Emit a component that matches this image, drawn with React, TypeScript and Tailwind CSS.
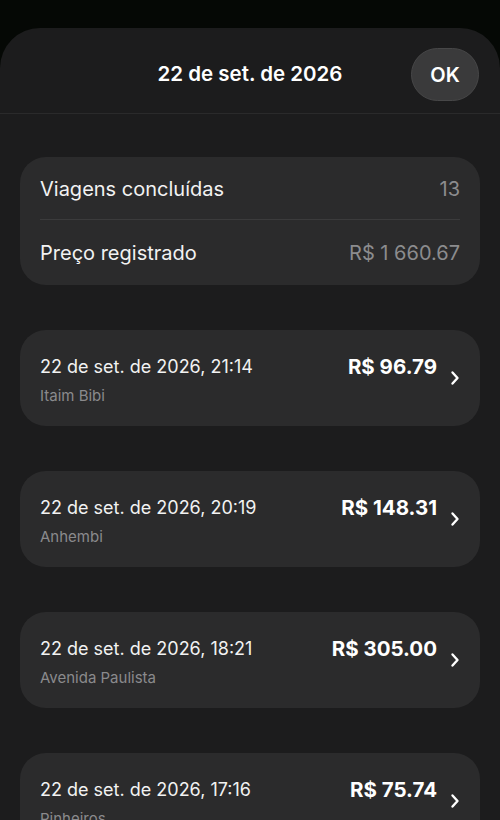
import React from "react";

const trips = [
  { date: "22 de set. de 2026, 21:14", place: "Itaim Bibi", price: "R$ 96.79" },
  { date: "22 de set. de 2026, 20:19", place: "Anhembi", price: "R$ 148.31" },
  { date: "22 de set. de 2026, 18:21", place: "Avenida Paulista", price: "R$ 305.00" },
  { date: "22 de set. de 2026, 17:16", place: "Pinheiros", price: "R$ 75.74" },
];

function Chevron() {
  return (
    <svg width="10" height="16" viewBox="0 0 10 16" fill="none">
      <path d="M2.5 2.5L7.5 8L2.5 13.5" stroke="white" strokeWidth="2.4" strokeLinecap="round" strokeLinejoin="round" />
    </svg>
  );
}

export default function App() {
  return (
    <div
      className="w-[500px] h-[820px] overflow-hidden bg-[#050805] pt-[28px]"
      style={{ fontFamily: 'Inter, "Noto Sans", "Liberation Sans", sans-serif' }}
    >
      <div className="h-full rounded-t-[40px] bg-[#1c1c1d] flex flex-col overflow-hidden">
        <div className="relative h-[86px] shrink-0 flex items-center justify-center border-b border-[#2a2a2b]">
          <div className="text-white text-[20.5px] font-semibold mt-[7px]">22 de set. de 2026</div>
          <button className="absolute right-[21px] top-[20px] w-[68px] h-[53px] rounded-full bg-[#3a3a3b] border border-[#474748] text-white text-[20px] font-semibold flex items-center justify-center">
            OK
          </button>
        </div>

        <div className="shrink-0 px-[20px] pt-[43px] flex flex-col">
          <div className="rounded-[26px] bg-[#2b2b2c] px-[20px]">
            <div className="h-[63px] flex items-center justify-between border-b border-[#3b3b3c] pt-[1px]">
              <span className="text-[#f2f2f2] text-[20px]">Viagens concluídas</span>
              <span className="text-[#8c8c8e] text-[20px]">13</span>
            </div>
            <div className="h-[65px] flex items-center justify-between">
              <span className="text-[#f2f2f2] text-[20px]">Preço registrado</span>
              <span className="text-[#8c8c8e] text-[20px]">R$ 1 660.67</span>
            </div>
          </div>

          <div className="mt-[45px] flex flex-col gap-[45px]">
            {trips.map((t) => (
              <div key={t.date} className="h-[96px] shrink-0 rounded-[26px] bg-[#2b2b2c] pl-[20px] pr-[19px] flex items-center">
                <div className="flex-1 self-start pt-[26px] flex justify-between">
                  <div className="flex flex-col">
                    <span className="text-[#f2f2f2] text-[18px] leading-[22px]">{t.date}</span>
                    <span className="text-[#8a8a8c] text-[15px] leading-[18px] mt-[9px]">{t.place}</span>
                  </div>
                  <span className="text-white text-[20.5px] font-bold leading-[22px] mr-[-2px]">{t.price}</span>
                </div>
                <div className="ml-[14px] w-[12px] flex justify-center">
                  <Chevron />
                </div>
              </div>
            ))}
          </div>
        </div>
      </div>
    </div>
  );
}
